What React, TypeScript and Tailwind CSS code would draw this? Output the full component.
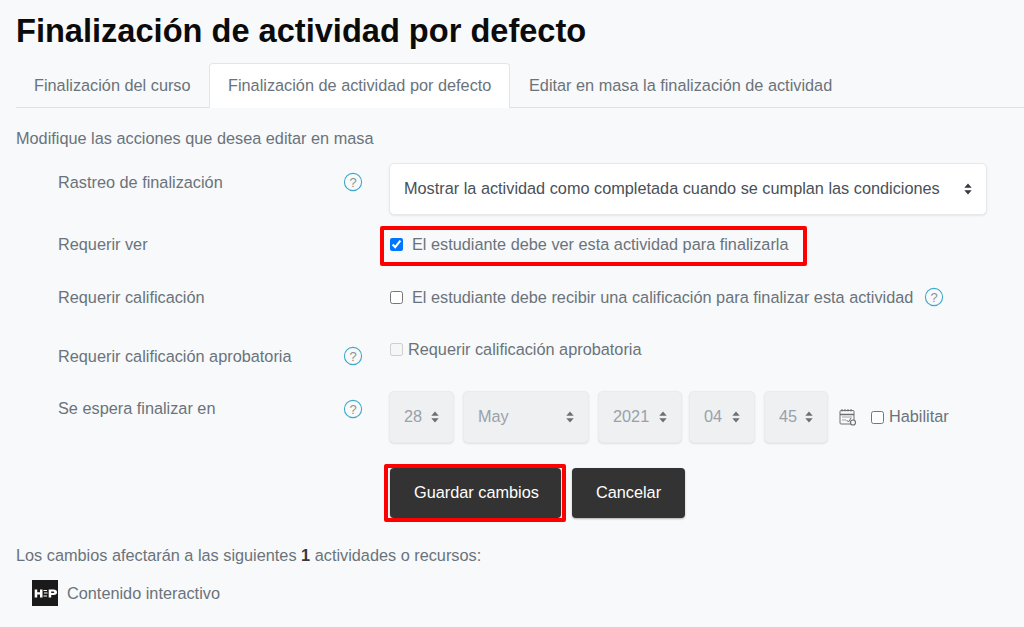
import React from "react";

function Help({ className = "" }: { className?: string }) {
  return (
    <svg width="20" height="20" viewBox="0 0 20 20" className={`block ${className}`}>
      <circle cx="10" cy="10" r="8.6" fill="none" stroke="#3fa8c9" strokeWidth="1.1" />
      <text x="10" y="14.5" textAnchor="middle" fontSize="13" fill="#8a9296" fontFamily="Liberation Sans">?</text>
    </svg>
  );
}

function Arrows({ color = "#343a40" }: { color?: string }) {
  return (
    <svg width="8" height="12" viewBox="0 0 8 12" className="shrink-0">
      <path d="M4 0.5 L7.7 4.8 H0.3 Z M4 11.5 L7.7 7.2 H0.3 Z" fill={color} />
    </svg>
  );
}

function Box({ w, text }: { w: string; text: string }) {
  return (
    <div className={`${w} h-[52px] flex items-center justify-between pl-[14px] pr-[14px] rounded-[5px] bg-[#eef0f2] border border-[#e9ebee] shadow-[0_1px_2px_rgba(0,0,0,0.1)] text-[#9aa1a8]`}>
      <span className="pb-[2px]">{text}</span>
      <Arrows color="#6c7075" />
    </div>
  );
}

function Row({ label, help, className = "", labelClass = "", helpClass = "", children }: { label: string; help?: boolean; className?: string; labelClass?: string; helpClass?: string; children: React.ReactNode }) {
  return (
    <div className={`flex items-start ${className}`}>
      <div className={`w-[328px] shrink-0 pl-[42px] ${labelClass}`}>{label}</div>
      <div className={`w-[17px] shrink-0 ${helpClass}`}>{help && <Help className="-ml-[1px]" />}</div>
      <div className="ml-[28px] flex-1">{children}</div>
    </div>
  );
}

export default function App() {
  return (
    <div className="w-[1024px] h-[627px] overflow-hidden bg-[#f8f9fa] pl-[16px] text-[16.3px] leading-[22px] text-[#6a737b]" style={{ fontFamily: '"Liberation Sans", Arial, sans-serif' }}>
      <h1 className="pt-[12px] text-[32.6px] leading-[38px] font-bold text-[#0b0b0b]">Finalización de actividad por defecto</h1>

      <div className="mt-[13px] h-[45px] flex border-b border-[#dee2e6]">
        <div className="w-[193px] pl-[18px] pt-[11px]">Finalización del curso</div>
        <div className="w-[301px] h-[45px] pl-[18px] pt-[10px] bg-white border border-b-0 border-[#e3e6e9] rounded-t-[4px]">Finalización de actividad por defecto</div>
        <div className="pl-[19px] pt-[11px]">Editar en masa la finalización de actividad</div>
      </div>

      <p className="mt-[19px] mb-[14px]">Modifique las acciones que desea editar en masa</p>

      <Row label="Rastreo de finalización" help labelClass="pt-[8px]" helpClass="pt-[9px]">
        <div className="w-[598px] h-[52px] flex items-center justify-between px-[14px] bg-white border border-[#e6e8ea] rounded-[5px] shadow-[0_1px_2px_rgba(0,0,0,0.08)] text-[#495057]">
          <span className="whitespace-nowrap pb-[2px]">Mostrar la actividad como completada cuando se cumplan las condiciones</span>
          <Arrows />
        </div>
      </Row>

      <Row label="Requerir ver" className="mt-[19px]" labelClass="-mt-[1px]">
        <label className="relative flex items-center gap-[9px] pl-[1px] -mt-[1px]">
          <input type="checkbox" defaultChecked readOnly className="w-[13px] h-[13px] m-0 accent-[#0075ff]" />
          <span>El estudiante debe ver esta actividad para finalizarla</span>
          <span className="absolute left-[-9px] top-[-7px] w-[427px] h-[40px] border-[4px] border-[#ff0000] rounded-[2px]" />
        </label>
      </Row>

      <Row label="Requerir calificación" className="mt-[32px]" labelClass="-mt-[1px]">
        <label className="flex items-center gap-[9px] pl-[1px] -mt-[1px]">
          <input type="checkbox" readOnly className="w-[13px] h-[13px] m-0" />
          <span className="whitespace-nowrap">El estudiante debe recibir una calificación para finalizar esta actividad</span>
          <Help className="ml-[2px]" />
        </label>
      </Row>

      <Row label="Requerir calificación aprobatoria" help className="mt-[31px]" labelClass="pt-[6px]" helpClass="pt-[7px]">
        <label className="flex items-center gap-[5px] pl-[1px] -mt-[1px]">
          <input type="checkbox" disabled className="w-[13px] h-[13px] m-0" />
          <span>Requerir calificación aprobatoria</span>
        </label>
      </Row>

      <Row label="Se espera finalizar en" help className="mt-[29px]" labelClass="pt-[1px]" helpClass="pt-[3px]">
        <div className="flex items-center -mt-[5px] whitespace-nowrap">
          <Box w="w-[65px] mr-[9px]" text="28" />
          <Box w="w-[126px] mr-[9px]" text="May" />
          <Box w="w-[84px] mr-[7px]" text="2021" />
          <Box w="w-[66px] mr-[9px]" text="04" />
          <Box w="w-[64px]" text="45" />
          <svg width="18" height="18" viewBox="0 0 18 18" className="ml-[11px] shrink-0">
            <rect x="1" y="2.5" width="14" height="13.5" rx="1" fill="none" stroke="#6c7075" strokeWidth="1" />
            <path d="M1 6.5 H15" stroke="#6c7075" strokeWidth="1.5" />
            <path d="M3 1 V3.5 M6 1 V3.5 M9 1 V3.5 M12 1 V3.5" stroke="#6c7075" strokeWidth="1" />
            <path d="M3 9 H13 M3 12 H7" stroke="#a0a5aa" strokeWidth="1" />
            <path d="M7.5 12 L9.5 14 L12 10" fill="none" stroke="#6c7075" strokeWidth="1" />
            <circle cx="14" cy="14.5" r="2.5" fill="#f8f9fa" stroke="#6c7075" strokeWidth="1.2" />
          </svg>
          <input type="checkbox" readOnly className="w-[13px] h-[13px] m-0 ml-[14px]" />
          <span className="ml-[5px] pb-[2px]">Habilitar</span>
        </div>
      </Row>

      <div className="mt-[25px] ml-[374px] flex">
        <div className="relative w-[171px] h-[50px] flex items-center justify-center rounded-[4px] bg-[#333333] text-white shadow-[0_1px_2px_rgba(0,0,0,0.3)]">
          <span className="pb-[2px] pl-[2px]">Guardar cambios</span>
          <span className="absolute left-[-6px] top-[-4px] w-[182px] h-[58px] border-[4px] border-[#ff0000] rounded-[2px]" />
        </div>
        <div className="ml-[11px] w-[113px] h-[50px] flex items-center justify-center rounded-[4px] bg-[#333333] text-white shadow-[0_1px_2px_rgba(0,0,0,0.3)]"><span className="pb-[2px]">Cancelar</span></div>
      </div>

      <p className="mt-[26px]">Los cambios afectarán a las siguientes <b className="text-[#343a40]">1</b> actividades o recursos:</p>

      <div className="mt-[14px] ml-[16px] flex items-center">
        <svg width="26" height="26" viewBox="0 0 26 26">
          <rect width="26" height="26" fill="#1a1a1a" />
          <path d="M2.7 9.5 H5.2 V12.3 H8 V9.5 H10.5 V17.5 H8 V14.5 H5.2 V17.5 H2.7 Z" fill="#fff" />
          <path d="M11.5 10.5 H15 M12 13 H15.5 M11.5 16 H15" stroke="#fff" strokeWidth="1.1" />
          <path d="M16.7 9.5 H21.5 Q25 9.5 25 12.3 Q25 15 21.5 15 H19.2 V17.5 H16.7 Z M19.2 11.5 V13 H21.2 Q22.3 13 22.3 12.2 Q22.3 11.5 21.2 11.5 Z" fill="#fff" fillRule="evenodd" />
        </svg>
        <span className="ml-[9px]">Contenido interactivo</span>
      </div>
    </div>
  );
}
